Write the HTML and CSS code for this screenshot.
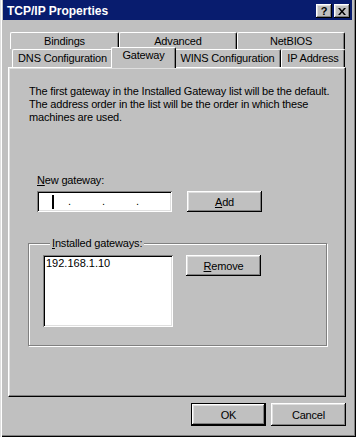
FILE: index.html
```html
<!DOCTYPE html>
<html lang="en">
<head>
    <meta charset="UTF-8">
    <title>TCP/IP Properties</title>
    <link rel="stylesheet" href="styles.css">
</head>
<body>
    <div class="window">
        <div class="titlebar">
            <span class="title">TCP/IP Properties</span>
            <div class="caption-buttons">
                <span class="cbtn help">?</span>
                <span class="cbtn close">
                    <svg width="8" height="7" viewBox="0 0 8 7"><path d="M0 0h2l2 2.5L6 0h2L5 3.5 8 7H6L4 4.5 2 7H0l3-3.5z" fill="#000"/></svg>
                </span>
            </div>
        </div>

        <div class="client">
            <div class="tabs">
                <div class="tab-row back">
                    <div class="tab w-bindings">Bindings</div>
                    <div class="tab w-advanced">Advanced</div>
                    <div class="tab w-netbios">NetBIOS</div>
                </div>
                <div class="tab-row front">
                    <div class="tab w-dns">DNS Configuration</div>
                    <div class="tab w-gateway active">Gateway</div>
                    <div class="tab w-wins">WINS Configuration</div>
                    <div class="tab w-ip">IP Address</div>
                </div>
            </div>

            <div class="panel">
                <p class="intro">The first gateway in the Installed Gateway list will be the default.<br>
                The address order in the list will be the order in which these<br>
                machines are used.</p>

                <div class="new-gateway">
                    <label class="field-label"><u>N</u>ew gateway:</label>
                    <div class="field-row">
                        <div class="ip-field">
                            <span class="caret"></span>
                            <span class="dot">.</span>
                            <span class="dot">.</span>
                            <span class="dot">.</span>
                        </div>
                        <button class="btn"><u>A</u>dd</button>
                    </div>
                </div>

                <fieldset class="group">
                    <legend><u>I</u>nstalled gateways:</legend>
                    <div class="group-row">
                        <div class="listbox">
                            <div class="list-item">192.168.1.10</div>
                        </div>
                        <button class="btn"><u>R</u>emove</button>
                    </div>
                </fieldset>
            </div>

            <div class="dialog-buttons">
                <button class="btn dlg default">OK</button>
                <button class="btn dlg">Cancel</button>
            </div>
        </div>
    </div>
</body>
</html>
```

FILE: styles.css
```css
body {
    margin: 0;
    background: #c0c0c0;
    font-family: "Liberation Sans", Arial, sans-serif;
    font-size: 11px;
    letter-spacing: -0.17px;
    color: #000;
}

u {
    text-decoration: underline;
    text-underline-offset: 1px;
}

.window {
    width: 356px;
    height: 437px;
    box-sizing: border-box;
    padding: 0 4px 4px 3px;
    background: #c0c0c0;
    box-shadow: inset 1px 0 #dfdfdf, inset 2px 0 #fff, inset -1px -1px #000, inset -2px -2px #808080;
    display: flex;
    flex-direction: column;
}

.titlebar {
    height: 20px;
    background: #081c6e;
    display: flex;
    align-items: center;
    justify-content: space-between;
    padding: 2px 2px 0 4px;
    box-sizing: border-box;
}

.title {
    color: #fff;
    font-weight: bold;
    font-size: 12px;
    letter-spacing: 0;
}

.caption-buttons {
    display: flex;
    gap: 2px;
}

.cbtn {
    width: 16px;
    height: 14px;
    box-sizing: border-box;
    background: #c0c0c0;
    box-shadow: inset -1px -1px #000, inset 1px 1px #fff, inset -2px -2px #808080, inset 2px 2px #dfdfdf;
    display: flex;
    align-items: center;
    justify-content: center;
    font-weight: bold;
    font-size: 11px;
    letter-spacing: 0;
    line-height: 1;
}

.cbtn svg {
    display: block;
}

.client {
    flex: 1;
    display: flex;
    flex-direction: column;
    padding-left: 5px;
}

/* tabs */
.tabs {
    margin-top: 12px;
}

.tab-row {
    display: flex;
}

.tab-row.back {
    height: 17px;
    padding-left: 2px;
}

.tab-row.front {
    height: 18px;
    padding-left: 4px;
}

.tab {
    box-sizing: border-box;
    border-top: 1px solid #fff;
    border-left: 1px solid #fff;
    border-right: 1px solid #000;
    border-radius: 2px 2px 0 0;
    box-shadow: inset -1px 0 #808080;
    text-align: center;
    line-height: 15px;
    padding-top: 1px;
    white-space: nowrap;
}

.w-bindings { width: 109px; }
.w-advanced { width: 118px; }
.w-netbios { width: 108px; }
.w-dns { width: 101px; }
.w-gateway { width: 61px; }
.w-wins { width: 107px; }
.w-ip { width: 64px; }

.tab.active {
    position: relative;
    z-index: 1;
    background: #c0c0c0;
    width: 65px;
    height: 21px;
    margin: -2px -2px -1px -2px;
    padding-top: 0;
}

/* panel */
.panel {
    width: 338px;
    height: 330px;
    box-sizing: border-box;
    border: 1px solid;
    border-color: #fff #000 #000 #fff;
    box-shadow: inset -1px -1px #808080, inset 1px 1px #dfdfdf;
    padding: 17px 18px 0 20px;
}

.intro {
    margin: 0;
    line-height: 13px;
    white-space: nowrap;
}

.new-gateway {
    margin-top: 50px;
    padding-left: 8px;
}

.field-label {
    display: block;
    line-height: 13px;
    margin-bottom: 4px;
}

.field-row {
    display: flex;
    gap: 15px;
}

.ip-field {
    width: 135px;
    height: 21px;
    box-sizing: border-box;
    background: #fff;
    box-shadow: inset 1px 1px #808080, inset -1px -1px #fff, inset 2px 2px #000, inset -2px -2px #dfdfdf;
    display: flex;
    align-items: center;
    padding-left: 15px;
}

.caret {
    width: 2px;
    height: 14px;
    background: #000;
    margin-right: 14px;
}

.dot {
    width: 34px;
    line-height: 1;
}

.btn {
    width: 75px;
    height: 21px;
    box-sizing: border-box;
    border: none;
    padding: 0;
    background: #c0c0c0;
    font-family: inherit;
    font-size: 11px;
    letter-spacing: -0.17px;
    color: #000;
    box-shadow: inset -1px -1px #000, inset 1px 1px #fff, inset -2px -2px #808080, inset 2px 2px #dfdfdf;
}

/* group box */
.group {
    margin: 25px 0 0 -1px;
    width: 299px;
    height: 109px;
    box-sizing: border-box;
    border: 1px solid #808080;
    box-shadow: inset 1px 1px #fff, 1px 1px #fff;
    padding: 5px 0 0 14px;
}

.group legend {
    margin-left: 7px;
    padding: 0 2px;
    line-height: 13px;
    background: #c0c0c0;
}

.group-row {
    display: flex;
    align-items: flex-start;
    gap: 13px;
}

.listbox {
    width: 130px;
    height: 72px;
    box-sizing: border-box;
    background: #fff;
    box-shadow: inset 1px 1px #808080, inset -1px -1px #fff, inset 2px 2px #000, inset -2px -2px #dfdfdf;
    padding: 2px 3px;
}

.list-item {
    line-height: 13px;
    letter-spacing: 0;
}

/* dialog buttons */
.dialog-buttons {
    display: flex;
    justify-content: flex-end;
    gap: 5px;
    margin: 6px 6px 0 0;
}

.btn.dlg {
    height: 23px;
}

.btn.default {
    box-shadow: inset 0 0 0 1px #000, inset -2px -2px #000, inset 2px 2px #fff, inset -3px -3px #808080, inset 3px 3px #dfdfdf;
}
```
